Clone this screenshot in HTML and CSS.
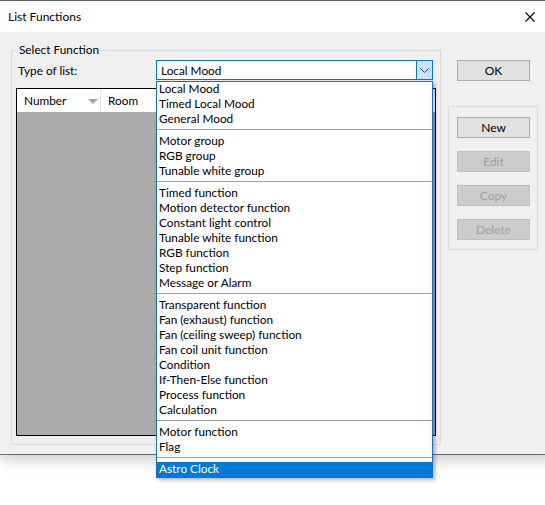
FILE: index.html
```html
<!DOCTYPE html>
<html lang="en">
<head>
    <meta charset="UTF-8">
    <title>List Functions</title>
    <link rel="stylesheet" href="styles.css">
</head>
<body>
<div class="window">
    <div class="titlebar">
        <span class="title">List Functions</span>
        <span class="close">
            <svg width="10" height="10" viewBox="0 0 10 10"><path d="M0.5 0.5L9.5 9.5M9.5 0.5L0.5 9.5" stroke="#000" stroke-width="1.1" fill="none"/></svg>
        </span>
    </div>
    <div class="client">
        <fieldset class="group main-group">
            <legend>Select Function</legend>
            <div class="type-row">
                <label class="type-label">Type of list:</label>
                <div class="combo">
                    <span class="combo-text">Local Mood</span>
                    <span class="combo-btn">
                        <svg width="9" height="5" viewBox="0 0 9 5"><path d="M0.5 0.5L4.5 4.5L8.5 0.5" stroke="#444" stroke-width="1" fill="none"/></svg>
                    </span>
                </div>
            </div>
            <div class="listview">
                <div class="lv-header">
                    <div class="lv-col col-number">Number<span class="sort-arrow"></span></div>
                    <div class="lv-col col-room">Room</div>
                </div>
                <div class="lv-body"></div>
            </div>
        </fieldset>
        <div class="side">
            <button class="btn">OK</button>
            <div class="group action-group">
                <button class="btn">New</button>
                <button class="btn" disabled>Edit</button>
                <button class="btn" disabled>Copy</button>
                <button class="btn" disabled>Delete</button>
            </div>
        </div>
    </div>
</div>

<ul class="dropdown">
    <li>Local Mood</li>
    <li>Timed Local Mood</li>
    <li>General Mood</li>
    <li class="sep"></li>
    <li>Motor group</li>
    <li>RGB group</li>
    <li>Tunable white group</li>
    <li class="sep"></li>
    <li>Timed function</li>
    <li>Motion detector function</li>
    <li>Constant light control</li>
    <li>Tunable white function</li>
    <li>RGB function</li>
    <li>Step function</li>
    <li>Message or Alarm</li>
    <li class="sep"></li>
    <li>Transparent function</li>
    <li>Fan (exhaust) function</li>
    <li>Fan (ceiling sweep) function</li>
    <li>Fan coil unit function</li>
    <li>Condition</li>
    <li>If-Then-Else function</li>
    <li>Process function</li>
    <li>Calculation</li>
    <li class="sep"></li>
    <li>Motor function</li>
    <li>Flag</li>
    <li class="sep"></li>
    <li class="selected">Astro Clock</li>
</ul>
</body>
</html>
```

FILE: styles.css
```css
*{
    box-sizing: border-box;
    margin: 0;
    padding: 0;
}
body{
    position: relative;
    width: 545px;
    height: 505px;
    overflow: hidden;
    background: #fff;
    font: 11.8px Lato, "Liberation Sans", sans-serif;
    color: #000;
}
.window{
    width: 553px;
    height: 455px;
    display: flex;
    flex-direction: column;
    background: #f0f0f0;
    border-top: 1px solid #5f5f5f;
    border-bottom: 1px solid #6a6a6a;
    box-shadow: 0 5px 14px rgba(0, 0, 0, 0.2);
}
.titlebar{
    height: 31px;
    flex: none;
    display: flex;
    align-items: center;
    justify-content: space-between;
    background: #fff;
    padding-left: 8px;
}
.title{
    font-size: 12px;
}
.close{
    width: 46px;
    height: 31px;
    display: flex;
    align-items: center;
    justify-content: center;
}
.client{
    flex: 1;
    display: flex;
    align-items: flex-start;
    padding: 11px 0 0 11px;
}

/* group boxes */
.group{
    border: 1px solid #dcdcdc;
}
.main-group{
    width: 430px;
    height: 402px;
    padding: 0;
}
.main-group legend{
    margin-left: 6px;
    padding: 0 1px;
    line-height: 14px;
}
.type-row{
    display: flex;
    align-items: center;
    margin-top: 3px;
}
.type-label{
    width: 144px;
    padding-left: 6px;
}
.combo{
    width: 277px;
    height: 20px;
    display: flex;
    align-items: center;
    background: #fff;
    border: 1px solid #0078d7;
}
.combo-text{
    flex: 1;
    padding-left: 4px;
}
.combo-btn{
    width: 16px;
    height: 100%;
    display: flex;
    align-items: center;
    justify-content: center;
    background: #cce4f7;
    border-left: 1px solid #0078d7;
}

/* list view */
.listview{
    width: 420px;
    height: 348px;
    margin: 8px 0 0 4px;
    border: 1px solid #000;
    display: flex;
    flex-direction: column;
    background: #ababab;
}
.lv-header{
    height: 23px;
    display: flex;
    background: #fff;
}
.lv-col{
    display: flex;
    align-items: center;
    padding-left: 7px;
    border-right: 1px solid #e5e5e5;
}
.col-number{
    width: 84px;
    position: relative;
}
.col-room{
    width: 110px;
}
.sort-arrow{
    position: absolute;
    left: 71px;
    top: 10px;
    border-left: 5px solid transparent;
    border-right: 5px solid transparent;
    border-top: 5px solid #a6a6a6;
}
.lv-body{
    flex: 1;
}

/* right column */
.side{
    margin-left: 7px;
    display: flex;
    flex-direction: column;
}
.btn{
    width: 73px;
    height: 21px;
    background: #e1e1e1;
    border: 1px solid #adadad;
    font: 12px Lato, "Liberation Sans", sans-serif;
    color: #000;
}
.btn:disabled{
    background: #cccccc;
    border-color: #bfbfbf;
    color: #a0a0a0;
}
.side > .btn{
    margin: 17px 0 0 9px;
}
.action-group{
    width: 90px;
    margin-top: 25px;
    padding: 10px 0 9px 8px;
    display: flex;
    flex-direction: column;
    gap: 13px;
}

/* open combo list */
.dropdown{
    position: absolute;
    left: 156px;
    top: 81px;
    width: 277px;
    list-style: none;
    background: #fff;
    border: 1px solid #1a6fbf;
    box-shadow: 2px 2px 4px rgba(0, 0, 0, 0.3);
}
.dropdown li{
    height: 15px;
    line-height: 14px;
    padding-left: 2px;
    white-space: nowrap;
}
.dropdown li.sep{
    height: 7px;
    padding: 0;
    border-top: 2px solid #fff;
}
.dropdown li.sep::before{
    content: "";
    display: block;
    height: 1px;
    background: #a0a0a0;
}
.dropdown li.selected{
    background: #0078d7;
    color: #fff;
}
```
